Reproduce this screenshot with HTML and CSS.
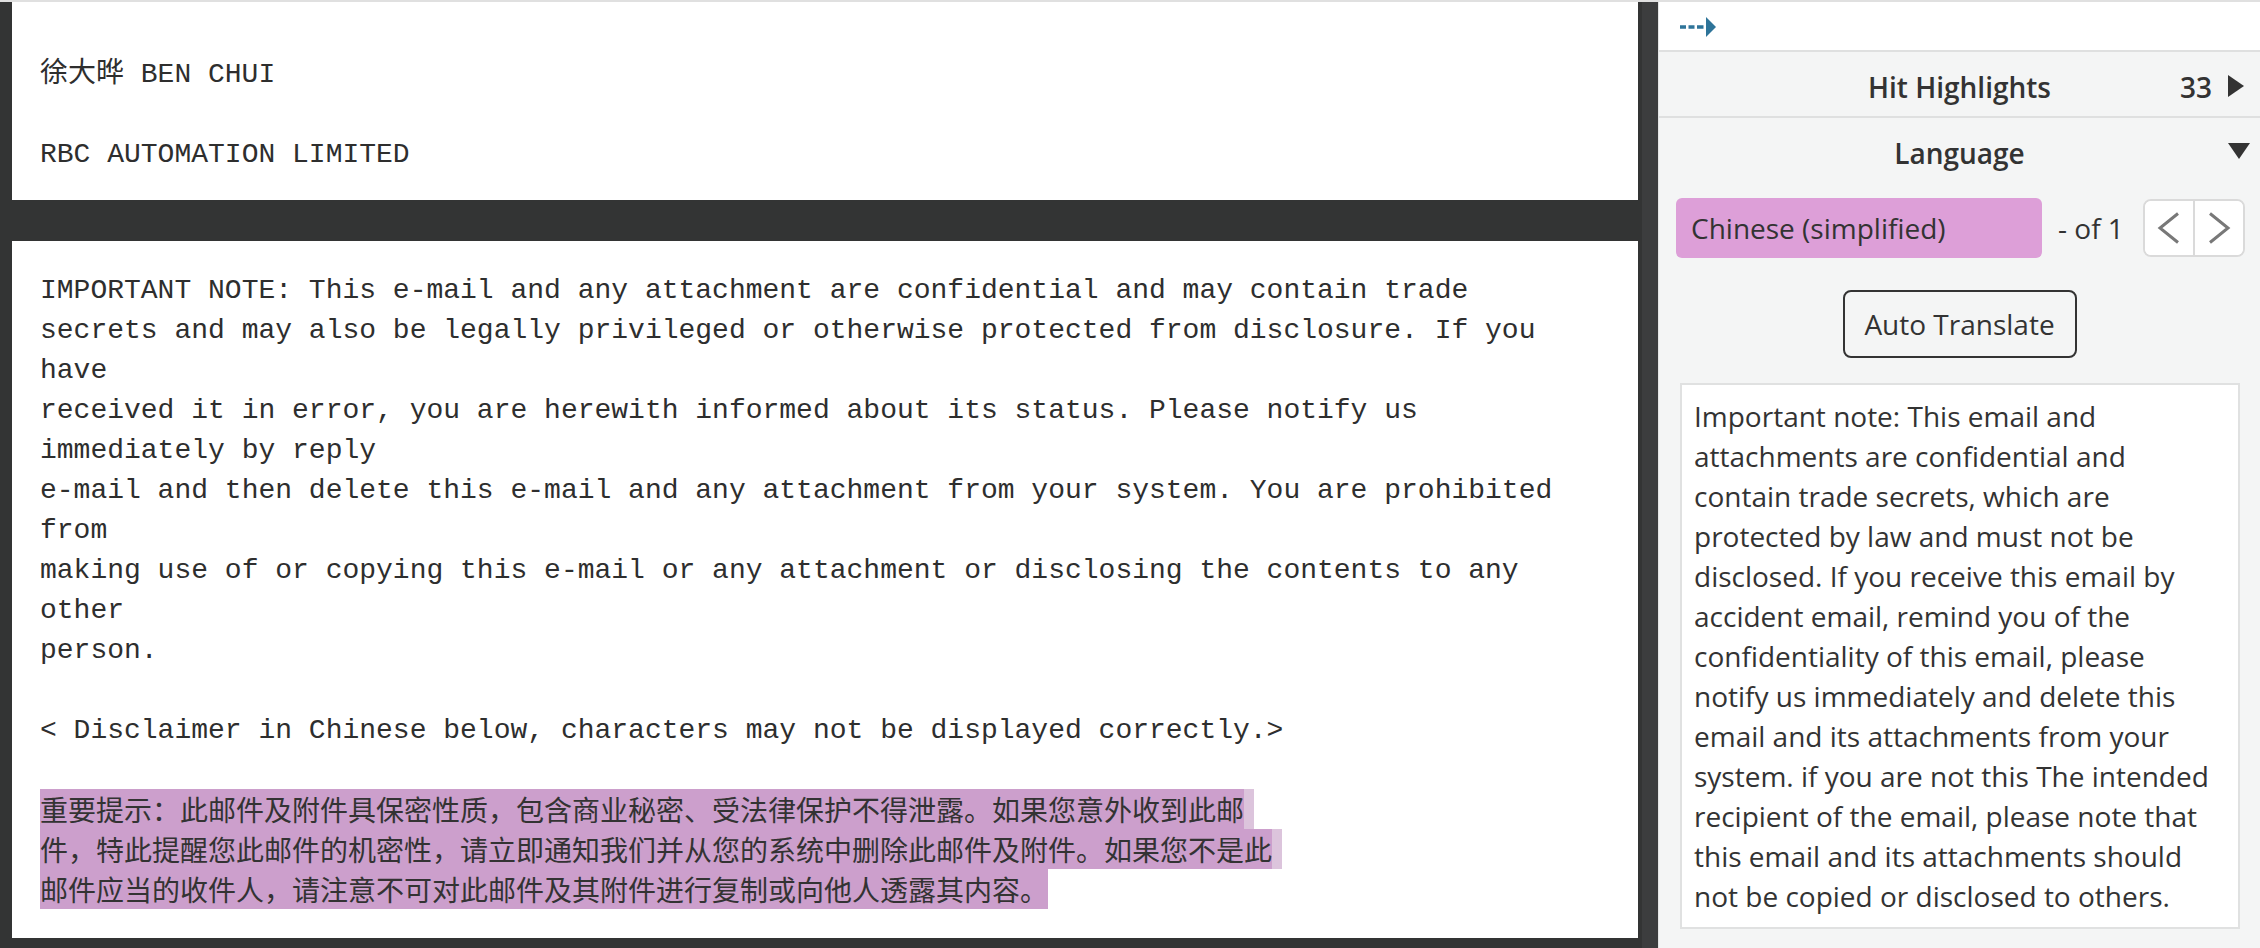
FILE: index.html
```html
<!DOCTYPE html>
<html lang="en">
<head>
    <meta charset="UTF-8">
    <title>Document Viewer</title>
    <link rel="stylesheet" href="styles.css">
</head>
<body>
    <div class="app">
        <main class="viewer">
            <div class="pages">
                <section class="page page-head">
<pre class="mail">徐大晔 BEN CHUI

RBC AUTOMATION LIMITED</pre>
                </section>
                <section class="page page-body">
<pre class="mail">IMPORTANT NOTE: This e-mail and any attachment are confidential and may contain trade
secrets and may also be legally privileged or otherwise protected from disclosure. If you
have
received it in error, you are herewith informed about its status. Please notify us
immediately by reply
e-mail and then delete this e-mail and any attachment from your system. You are prohibited
from
making use of or copying this e-mail or any attachment or disclosing the contents to any
other
person.

&lt; Disclaimer in Chinese below, characters may not be displayed correctly.&gt;
</pre>
                    <div class="cjk-block"><span class="hl">重要提示：此邮件及附件具保密性质，包含商业秘密、受法律保护不得泄露。如果您意外收到此邮</span><span class="hl-tail"></span><br><span class="hl">件，特此提醒您此邮件的机密性，请立即通知我们并从您的系统中删除此邮件及附件。如果您不是此</span><span class="hl-tail"></span><br><span class="hl">邮件应当的收件人，请注意不可对此邮件及其附件进行复制或向他人透露其内容。</span></div>
                </section>
            </div>
            <div class="scroll-track"></div>
        </main>

        <aside class="sidebar">
            <div class="toolbar">
                <svg class="collapse-icon" width="36" height="20" viewBox="0 0 36 20">
                    <rect x="0" y="8.25" width="6" height="3.5" fill="#2e7499"/>
                    <rect x="8.5" y="8.25" width="6" height="3.5" fill="#2e7499"/>
                    <rect x="17" y="8.25" width="6.5" height="3.5" fill="#2e7499"/>
                    <polygon points="26,0 36,10 26,20" fill="#2e7499"/>
                </svg>
            </div>

            <div class="section-head with-border">
                <span></span>
                <span class="section-title">Hit Highlights</span>
                <span class="head-right"><span class="hit-count">33</span><span class="tri tri-right"></span></span>
            </div>

            <div class="section-head lang-head">
                <span></span>
                <span class="section-title">Language</span>
                <span class="head-right"><span class="tri tri-down"></span></span>
            </div>

            <div class="lang-body">
                <div class="lang-row">
                    <div class="lang-chip">Chinese (simplified)</div>
                    <span class="lang-count">- of 1</span>
                    <div class="pager">
                        <button class="pager-btn">
                            <svg width="24" height="32" viewBox="0 0 24 32"><polyline points="21,1.5 3,16 21,30.5" fill="none" stroke="#787878" stroke-width="3"/></svg>
                        </button>
                        <button class="pager-btn">
                            <svg width="24" height="32" viewBox="0 0 24 32"><polyline points="3,1.5 21,16 3,30.5" fill="none" stroke="#787878" stroke-width="3"/></svg>
                        </button>
                    </div>
                </div>

                <button class="translate-btn">Auto Translate</button>

                <div class="translation">Important note: This email and<br>attachments are confidential and<br>contain trade secrets, which are<br>protected by law and must not be<br>disclosed. If you receive this email by<br>accident email, remind you of the<br>confidentiality of this email, please<br>notify us immediately and delete this<br>email and its attachments from your<br>system. if you are not this The intended<br>recipient of the email, please note that<br>this email and its attachments should<br>not be copied or disclosed to others.</div>
            </div>
        </aside>
    </div>
</body>
</html>
```

FILE: styles.css
```css
html, body {
    margin: 0;
    padding: 0;
    height: 100%;
    overflow: hidden;
}
body {
    background: #333434;
    font-family: 'Open Sans', sans-serif;
    color: #333;
}
.app {
    display: flex;
    height: 946px;
    border-top: 2px solid #e0e0e0;
}

/* document viewer */
.viewer {
    flex: 0 0 1658px;
    display: flex;
    background: #333434;
}
.pages {
    flex: 1;
    padding-left: 12px;
    display: flex;
    flex-direction: column;
    gap: 41px;
}
.page {
    background: #fff;
    padding: 0 28px;
    overflow: hidden;
}
.page-head {
    height: 198px;
    padding-top: 53px;
    box-sizing: border-box;
}
.page-body {
    height: 697px;
    padding-top: 30px;
    box-sizing: border-box;
}
.mail {
    margin: 0;
    font-family: 'Liberation Mono', 'Noto Sans CJK SC', monospace;
    font-size: 28px;
    line-height: 40px;
    color: #2e2e2e;
    white-space: pre;
}
.cjk-block {
    font-family: 'Noto Sans CJK SC', sans-serif;
    font-size: 28px;
    line-height: 40px;
    color: #333;
    margin-top: 38px;
}
.hl {
    background: #cc9fcc;
}
.hl-tail {
    display: inline-block;
    vertical-align: top;
    width: 10px;
    height: 40px;
    background: #dcc4dc;
}
.scroll-track {
    width: 16px;
    border-left: 4px solid #333434;
    background: #3c3d3e;
}

/* right panel */
.sidebar {
    flex: 1;
    background: #f4f5f5;
    border-left: 1px solid #e4e5e5;
    display: flex;
    flex-direction: column;
}
.toolbar {
    height: 48px;
    background: #fff;
    border-bottom: 2px solid #dfe0e0;
    padding-left: 21px;
    display: flex;
    align-items: center;
}
.collapse-icon {
    display: block;
    margin-top: 1px;
}
.section-head {
    display: grid;
    grid-template-columns: 1fr auto 1fr;
    align-items: center;
    height: 64px;
    padding-top: 6px;
    box-sizing: border-box;
}
.section-head.with-border {
    height: 66px;
    border-bottom: 2px solid #dfe0e0;
}
.section-title {
    font-size: 28px;
    font-weight: 600;
    color: #333;
}
.head-right {
    justify-self: end;
    display: flex;
    align-items: center;
    gap: 16px;
    padding-right: 16px;
}
.hit-count {
    font-size: 28px;
    font-weight: 600;
    color: #333;
}
.tri {
    width: 0;
    height: 0;
}
.tri-right {
    margin-top: -3px;
    border-top: 11px solid transparent;
    border-bottom: 11px solid transparent;
    border-left: 16px solid #333;
}
.tri-down {
    margin-right: -3px;
    margin-top: -4px;
    border-left: 11px solid transparent;
    border-right: 11px solid transparent;
    border-top: 16px solid #333;
}
.lang-head .head-right {
    padding-right: 13px;
}

.lang-body {
    padding: 16px 0 0 17px;
    display: flex;
    flex-direction: column;
}
.lang-row {
    display: flex;
    align-items: center;
}
.lang-chip {
    width: 366px;
    height: 60px;
    box-sizing: border-box;
    padding-left: 15px;
    background: #dd9fd8;
    border-radius: 6px;
    font-size: 28px;
    line-height: 60px;
    color: #333;
}
.lang-count {
    margin-left: 16px;
    font-size: 28px;
    color: #333;
}
.pager {
    margin-left: 19px;
    display: flex;
    width: 102px;
    height: 58px;
    box-sizing: border-box;
    border: 2px solid #dadada;
    border-radius: 8px;
    background: #fff;
    overflow: hidden;
}
.pager-btn {
    flex: 1;
    border: none;
    background: #fff;
    padding: 0;
    display: flex;
    align-items: center;
    justify-content: center;
}
.pager-btn + .pager-btn {
    border-left: 2px solid #dadada;
}
.translate-btn {
    align-self: center;
    margin: 32px 0 0 -17px;
    width: 234px;
    height: 68px;
    border: 2px solid #333;
    border-radius: 8px;
    background: #f4f5f5;
    font-family: 'Open Sans', sans-serif;
    font-size: 28px;
    color: #333;
}
.translation {
    margin: 25px 20px 0 4px;
    height: 546px;
    box-sizing: border-box;
    padding: 11px 12px;
    background: #fff;
    border: 2px solid #e0e1e1;
    font-size: 28px;
    line-height: 40px;
    color: #333;
    white-space: nowrap;
}
```
